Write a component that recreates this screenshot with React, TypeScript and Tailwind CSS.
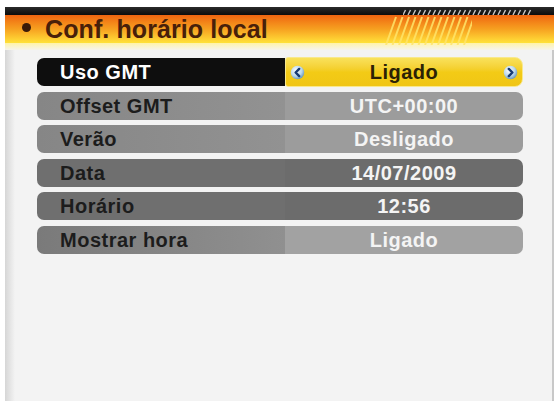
import React from 'react';

type Row = {
  label: string;
  value: string;
  left: string;
  right: string;
};

const rows: Row[] = [
  { label: 'Offset GMT', value: 'UTC+00:00', left: 'bg-gradient-to-r from-[#868686] to-[#929292]', right: 'bg-[#9c9c9c]' },
  { label: 'Verão', value: 'Desligado', left: 'bg-gradient-to-r from-[#868686] to-[#929292]', right: 'bg-[#9c9c9c]' },
  { label: 'Data', value: '14/07/2009', left: 'bg-[#6f6f6f]', right: 'bg-[#6c6c6c]' },
  { label: 'Horário', value: '12:56', left: 'bg-[#6f6f6f]', right: 'bg-[#6c6c6c]' },
  { label: 'Mostrar hora', value: 'Ligado', left: 'bg-gradient-to-r from-[#7a7a7a] to-[#909090]', right: 'bg-[#a2a2a2]' },
];

const font = { fontFamily: '"Liberation Sans", Arial, sans-serif' };

function ArrowDot({ dir }: { dir: 'left' | 'right' }) {
  return (
    <svg width="15" height="15" viewBox="0 0 16 16">
      <defs>
        <radialGradient id={`g-${dir}`} cx="40%" cy="35%" r="70%">
          <stop offset="0%" stopColor="#ffffff" />
          <stop offset="60%" stopColor="#b9d6ea" />
          <stop offset="100%" stopColor="#5f8fb5" />
        </radialGradient>
      </defs>
      <circle cx="8" cy="8" r="7.2" fill={`url(#g-${dir})`} />
      {dir === 'left' ? (
        <path d="M9.8 4.2 L6 8 L9.8 11.8" fill="none" stroke="#173a73" strokeWidth="2.6" strokeLinecap="round" strokeLinejoin="round" />
      ) : (
        <path d="M6.2 4.2 L10 8 L6.2 11.8" fill="none" stroke="#173a73" strokeWidth="2.6" strokeLinecap="round" strokeLinejoin="round" />
      )}
    </svg>
  );
}

export default function App() {
  return (
    <div className="w-[559px] h-[401px] bg-white overflow-hidden pt-[7px] px-[5px]" style={font}>
      <div className="flex flex-col h-full">
        {/* title bar */}
        <div className="relative">
          <div className="h-[8px] bg-gradient-to-b from-[#2a2a2a] to-[#0c0c0c]" />
          <div className="h-[28px] bg-gradient-to-b from-[#ee6410] via-[#f6a020] to-[#ffe23a] flex items-center pl-[17px]">
            <span className="w-[9px] h-[9px] rounded-full bg-[#3a1a08] mr-[14px] mb-[4px]" />
            <span className="text-[25px] font-bold text-[#48200a] leading-none tracking-[0.1px]">Conf. horário local</span>
          </div>
          <div className="h-[7px] bg-gradient-to-b from-[#fff3a8] to-[#f6f4ec]" />
          <svg className="absolute left-[375px] top-[8px]" width="92" height="30" viewBox="0 0 92 30">
            {Array.from({ length: 13 }).map((_, i) => (
              <line key={i} x1={6 + i * 6.5} y1={30} x2={16 + i * 6.5} y2={2} stroke="#ffe56a" strokeWidth="2" opacity="0.85" />
            ))}
          </svg>
          <svg className="absolute left-[398px] top-[2px]" width="130" height="6" viewBox="0 0 130 6">
            {Array.from({ length: 26 }).map((_, i) => (
              <line key={i} x1={i * 5} y1={6} x2={i * 5 + 2.5} y2={1} stroke="#c9c9c9" strokeWidth="1.4" />
            ))}
          </svg>
        </div>

        {/* panel */}
        <div className="flex-1 bg-[#f3f3f3] border-r-[2px] border-[#c8c8c8] relative">
          <div className="absolute left-0 top-0 bottom-0 w-[10px] bg-gradient-to-r from-[#d6d6d6] to-[#f3f3f3]" />
          <div className="relative flex flex-col gap-[5.5px] pt-[8px] pl-[32px] pr-[29px] text-[20px] font-bold tracking-[0.5px]">
            <div className="flex h-[28px]">
              <div className="w-[248px] bg-[#0e0e0e] rounded-l-[7px] flex items-center pl-[23px] text-white">
                Uso GMT
              </div>
              <div className="flex-1 -my-[1px] rounded-r-[8px] rounded-l-[3px] bg-gradient-to-b from-[#f9e15a] via-[#f3cb16] to-[#f0c515] border border-[#f8e88c] flex items-center justify-between px-[4px] text-[#2b2105]">
                <ArrowDot dir="left" />
                <span>Ligado</span>
                <ArrowDot dir="right" />
              </div>
            </div>
            {rows.map((r) => (
              <div key={r.label} className="flex h-[28px]">
                <div className={`w-[248px] ${r.left} rounded-l-[7px] flex items-center pl-[23px] text-[#1c1c1c]`}>
                  {r.label}
                </div>
                <div className={`flex-1 ${r.right} rounded-r-[7px] flex items-center justify-center text-[#f4f4f4]`}>
                  {r.value}
                </div>
              </div>
            ))}
          </div>
        </div>
      </div>
    </div>
  );
}
